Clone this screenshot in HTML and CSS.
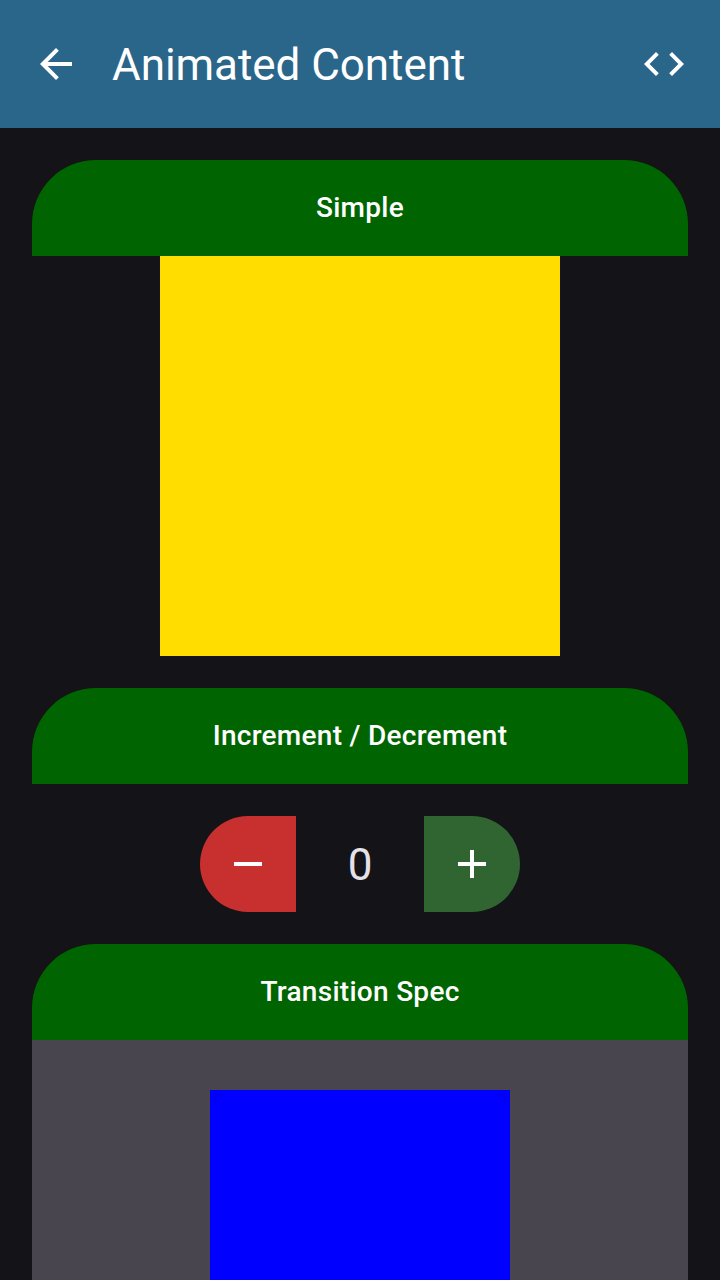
FILE: index.html
```html
<!DOCTYPE html>
<html lang="en">
<head>
<meta charset="utf-8">
<title>Animated Content</title>
<link rel="stylesheet" href="styles.css">
</head>
<body>
<header class="app-bar">
  <svg class="icon" viewBox="0 0 24 24"><path d="M20 11H7.83l5.59-5.59L12 4l-8 8 8 8 1.41-1.41L7.83 13H20v-2z"/></svg>
  <h1 class="title">Animated Content</h1>
  <svg class="icon" viewBox="0 0 24 24"><path d="M9.4 16.6L4.8 12l4.6-4.6L8 6l-6 6 6 6 1.4-1.4zm5.2 0l4.6-4.6-4.6-4.6L16 6l6 6-6 6-1.4-1.4z"/></svg>
</header>
<main class="content">
  <section class="section">
    <h2 class="heading">Simple</h2>
    <div class="yellow-box"></div>
  </section>
  <section class="section">
    <h2 class="heading">Increment / Decrement</h2>
    <div class="counter">
      <button class="step minus" aria-label="Decrement"><svg class="icon" viewBox="0 0 24 24"><path d="M19 13H5v-2h14v2z"/></svg></button>
      <span class="value">0</span>
      <button class="step plus" aria-label="Increment"><svg class="icon" viewBox="0 0 24 24"><path d="M19 13h-6v6h-2v-6H5v-2h6V5h2v6h6v2z"/></svg></button>
    </div>
  </section>
  <section class="section">
    <h2 class="heading">Transition Spec</h2>
    <div class="panel"><div class="blue-box"></div></div>
  </section>
</main>
</body>
</html>
```
FILE: styles.css
```css
* { box-sizing: border-box; }
body {
  margin: 0;
  height: 1280px;
  overflow: hidden;
  display: flex;
  flex-direction: column;
  background: #141318;
  color: #e6e1e9;
  font-family: Roboto, sans-serif;
}
.app-bar {
  flex: none;
  height: 128px;
  padding: 0 32px;
  display: flex;
  align-items: center;
  background: #2a6689;
  color: #fff;
}
.icon { display: block; flex: none; width: 48px; height: 48px; fill: #fff; }
.title {
  flex: 1;
  margin: 0 0 0 32px;
  padding-top: 1px;
  font-size: 44px;
  line-height: 56px;
  font-weight: 400;
  letter-spacing: -0.05px;
}
.content { padding: 32px 32px 0; display: flex; flex-direction: column; gap: 32px; }
.heading {
  margin: 0;
  height: 96px;
  border-radius: 64px 64px 0 0;
  background: #006400;
  color: #fff;
  font-size: 28px;
  line-height: 96px;
  font-weight: 500;
  letter-spacing: 0.28px;
  text-align: center;
}
.yellow-box { width: 400px; height: 400px; margin: 0 auto; background: #ffdd00; }
.counter { display: flex; justify-content: center; align-items: center; padding-top: 32px; }
.step {
  width: 96px;
  height: 96px;
  padding: 0;
  border: 0;
  display: flex;
  align-items: center;
  justify-content: center;
}
.minus { background: #c83030; border-radius: 48px 0 0 48px; }
.plus { background: #306430; border-radius: 0 48px 48px 0; }
.value { width: 128px; padding-top: 1px; text-align: center; font-size: 44px; line-height: 56px; }
.panel { height: 240px; padding-top: 50px; background: #49454e; }
.blue-box { width: 300px; height: 190px; margin: 0 auto; background: #0000ff; }
```
